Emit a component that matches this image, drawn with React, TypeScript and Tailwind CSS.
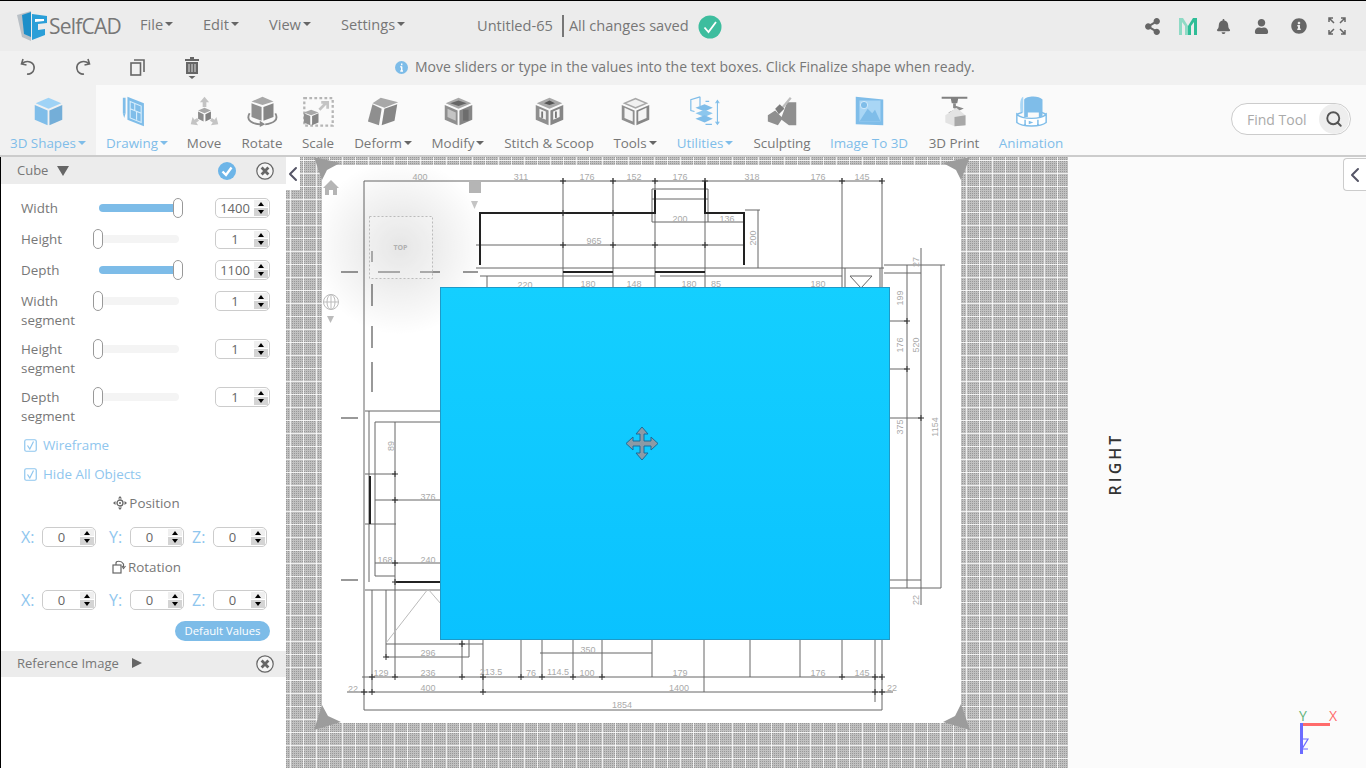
import React from 'react';
import { FaBell, FaInfoCircle, FaShareAlt, FaUser } from 'react-icons/fa';
import { ChevronLeft, Search } from 'lucide-react';

const Caret = ({ color = 'border-t-[#666]' }: { color?: string }) => (
  <span className={`ml-[2px] inline-block h-0 w-0 border-x-[4px] border-t-[4px] border-x-transparent ${color}`} />
);

const MenuItem = ({ label, className }: { label: string; className: string }) => (
  <div className={`mb-[3px] flex items-center text-[14.6px] text-[#777] ${className}`}>
    {label}
    <Caret />
  </div>
);

const Box = ({ top = '#a8a8a8', left = '#8f8f8f', right = '#868686' }) => (
  <>
    <polygon points="18,3 32,9 18,15 4,9" fill={top} />
    <polygon points="3,11 17,17 17,33 3,27" fill={left} />
    <polygon points="19,17 33,11 33,27 19,33" fill={right} />
  </>
);

const icons: Record<string, React.ReactNode> = {
  shapes: <Box top="#9fd3f6" left="#7fbde9" right="#74aed8" />,
  drawing: (
    <>
      <rect x="2" y="3" width="3" height="17" fill="#7fbde9" />
      <polygon points="2,20 5,20 3.5,25" fill="#7fbde9" />
      <polygon points="7,2 25,9 25,34 7,27" fill="#7fbde9" />
      <path d="M10 7 L22 12 L22 30 L10 25 Z M10 15 L22 20 M15 9 L15 17 M17 18 L17 27" fill="none" stroke="#d8eefc" strokeWidth="1.2" />
    </>
  ),
  move: (
    <>
      <path d="M18 2 L23 8 H20 V13 H16 V8 H13 Z M3 32 L5 24 L7 27 L10 25 L12 28 L9 30 L11 33 Z M33 32 L31 24 L29 27 L26 25 L24 28 L27 30 L25 33 Z" fill="#c4c4c4" />
      <polygon points="18,14 25,17 18,20 11,17" fill="#a8a8a8" />
      <polygon points="11,18 17,21 17,29 11,26" fill="#8b8b8b" />
      <polygon points="19,21 25,18 25,26 19,29" fill="#808080" />
    </>
  ),
  rotate: (
    <>
      <polygon points="18,2 30,7 18,11 6,7" fill="#a8a8a8" />
      <polygon points="6,9 17,13 17,28 6,24" fill="#8f8f8f" />
      <polygon points="19,13 30,9 30,24 19,28" fill="#868686" />
      <path d="M4 20 C-1 28 8 32 16 32 M32 20 C36 27 30 31 21 32" fill="none" stroke="#8a8a8a" strokeWidth="2" />
      <path d="M15 28 L21 32 L15 35 Z" fill="#8a8a8a" />
    </>
  ),
  scale: (
    <>
      <rect x="2.5" y="3.5" width="31" height="30" fill="none" stroke="#b5b5b5" strokeWidth="2.5" strokeDasharray="3 2.5" />
      <path d="M19 16 L27 8 M21 8 H28 V15" fill="none" stroke="#c4c4c4" strokeWidth="3" />
      <polygon points="10,16 18,19 10,22 2,19" fill="#a8a8a8" />
      <polygon points="2,20 9,23 9,33 2,30" fill="#8f8f8f" />
      <polygon points="11,23 18,20 18,30 11,33" fill="#868686" />
    </>
  ),
  deform: (
    <>
      <polygon points="15,3 34,8 19,14 6,9" fill="#a8a8a8" />
      <polygon points="6,10 16,15 13,33 1,29" fill="#8f8f8f" />
      <polygon points="19,15 33,10 30,28 16,33" fill="#868686" />
    </>
  ),
  modify: (
    <>
      <Box />
      <polygon points="18,6 27,9 18,12 9,9" fill="#666" />
      <polygon points="6,15 15,19 15,28 6,24" fill="#c4c4c4" />
      <rect x="23" y="16" width="6" height="12" fill="#6d6d6d" />
    </>
  ),
  stitch: (
    <>
      <Box />
      <polygon points="18,6 24,9 18,11 12,9" fill="#555" />
      <polygon points="7,15 14,18 14,27 7,24" fill="#f4f4f4" />
      <polygon points="22,18 29,15 29,24 22,27" fill="#f4f4f4" />
      <rect x="24" y="18" width="2" height="7" fill="#777" />
      <rect x="9" y="18" width="2" height="7" fill="#777" />
    </>
  ),
  tools: (
    <>
      <Box />
      <polygon points="18,5 28,9 18,13 8,9" fill="#f1f1f1" />
      <polygon points="6,14 15,18 15,29 6,25" fill="#f4f4f4" />
      <polygon points="21,18 30,14 30,25 21,29" fill="#f4f4f4" />
    </>
  ),
  utilities: (
    <>
      <path d="M12 2 L2 5 V17 L6 18 M12 2 V12 M18 7 H22 M18 32 H25" fill="none" stroke="#7fbde9" strokeWidth="1.3" />
      <polygon points="17,10 26,14 17,18 7,14" fill="#7fbde9" />
      <polygon points="17,16 26,20 17,24 7,20" fill="#8cc7ee" />
      <polygon points="17,22 26,26 17,30 7,26" fill="#7fbde9" />
      <path d="M31 6 V32 M29 9 L31 6 L33 9 M29 29 L31 32 L33 29" fill="none" stroke="#7fbde9" strokeWidth="1.2" />
    </>
  ),
  sculpting: (
    <>
      <polygon points="2,22 10,17 17,24 23,8 33,8 33,33 25,33 17,27 13,33 2,29" fill="#8f8f8f" />
      <path d="M17 15 L27 3" stroke="#bdbdbd" strokeWidth="2.5" />
      <polygon points="10,15 15,10 20,15 14,21" fill="#7d7d7d" />
    </>
  ),
  image: (
    <>
      <polygon points="3,2 33,5 33,33 3,32" fill="#7fbde9" />
      <rect x="7" y="6" width="23" height="23" fill="#a9d6f5" />
      <polygon points="7,29 16,15 21,20 24,16 30,29" fill="#7fbde9" />
      <circle cx="12" cy="11" r="4" fill="#7fbde9" stroke="#d8eefc" />
    </>
  ),
  print: (
    <>
      <path d="M4 2 H32 V4 H22 L21 9 H15 L14 4 H4 Z" fill="#808080" />
      <path d="M18 9 V13 L24 15 L15 19 L22 22" fill="none" stroke="#8a8a8a" strokeWidth="3" />
      <polygon points="20,14 30,22 30,33 18,34 8,30 8,22" fill="#e3e3e3" />
      <polygon points="18,24 30,22 30,33 18,34" fill="#a8a8a8" />
    </>
  ),
  animation: (
    <>
      <path d="M10 5 C12 1 26 0 30 5 V24 H26 V19 H14 V24 H10 Z" fill="#7fbde9" />
      <path d="M9 2 C6 3 5 8 6 19 L9 19 Z" fill="#a9d6f5" />
      <path d="M2 21 L8 19 M34 21 L29 19 M2 21 V30 C8 35 28 35 34 30 V21 C28 27 8 27 2 21 Z M11 27 V33 M25 27 V33" fill="#fff" stroke="#7fbde9" strokeWidth="1.6" />
      <polygon points="15,28 20,30 15,32" fill="#7fbde9" />
    </>
  ),
};

const tools = [
  { key: 'drawing', label: 'Drawing', w: 'w-[82px]', blue: true, caret: true },
  { key: 'move', label: 'Move', w: 'w-[52px]' },
  { key: 'rotate', label: 'Rotate', w: 'w-[64px]' },
  { key: 'scale', label: 'Scale', w: 'w-[48px]' },
  { key: 'deform', label: 'Deform', w: 'w-[82px]', caret: true },
  { key: 'modify', label: 'Modify', w: 'w-[68px]', caret: true },
  { key: 'stitch', label: 'Stitch & Scoop', w: 'w-[114px]' },
  { key: 'tools', label: 'Tools', w: 'w-[58px]', caret: true },
  { key: 'utilities', label: 'Utilities', w: 'w-[82px]', blue: true, caret: true },
  { key: 'sculpting', label: 'Sculpting', w: 'w-[72px]' },
  { key: 'image', label: 'Image To 3D', w: 'w-[102px]', blue: true },
  { key: 'print', label: '3D Print', w: 'w-[68px]' },
  { key: 'animation', label: 'Animation', w: 'w-[86px]', blue: true },
];

const ToolButton = ({ k, label, w, blue, caret }: { k: string; label: string; w: string; blue?: boolean; caret?: boolean }) => (
  <div className={`flex shrink-0 flex-col items-center pt-[10px] ${w}`}>
    <svg width="33" height="33" viewBox="0 0 36 36">
      {icons[k]}
    </svg>
    <div className={`mt-[6px] flex items-center whitespace-nowrap text-[13.4px] leading-[18px] ${blue ? 'text-[#7fbde9]' : 'text-[#777]'}`}>
      {label}
      {caret && <Caret color={blue ? 'border-t-[#7fbde9]' : 'border-t-[#666]'} />}
    </div>
  </div>
);

const Spinner = () => (
  <div className="flex h-[16px] w-[14px] flex-col justify-between">
    <div className="flex h-[7px] items-center justify-center bg-[#efefef]">
      <span className="h-0 w-0 border-x-[3.5px] border-b-[4px] border-x-transparent border-b-black" />
    </div>
    <div className="flex h-[8px] items-center justify-center bg-[#d4d4d4]">
      <span className="h-0 w-0 border-x-[3.5px] border-t-[4px] border-x-transparent border-t-black" />
    </div>
  </div>
);

const NumberBox = ({ value, w = 'w-[55px]', className = '' }: { value: string; w?: string; className?: string }) => (
  <div className={`flex h-[20px] items-center rounded-[5px] border border-[#ccc] bg-white pr-[1px] ${w} ${className}`}>
    <div className="flex-1 text-center text-[13px] leading-none text-[#666]">{value}</div>
    <Spinner />
  </div>
);

const Slider = ({ full }: { full?: boolean }) => (
  <div className={`relative h-[8px] w-[80px] rounded-full ${full ? 'bg-[#7dbce8]' : 'bg-[#f4f4f4]'}`}>
    <div className={`absolute top-[-6px] h-[20px] w-[10px] rounded-[5px] border border-[#999] bg-white ${full ? 'right-[-4px]' : 'left-[-6px]'}`} />
  </div>
);

const ParamRow = ({ label, second, value, full, className }: { label: string; second?: string; value: string; full?: boolean; className: string }) => (
  <div className={`flex items-start pl-[20px] ${className}`}>
    <div className="w-[78px] text-[13.4px] leading-[19px] text-[#777]">
      <div>{label}</div>
      {second && <div>{second}</div>}
    </div>
    <div className="flex h-[18px] w-[116px] items-center">
      <Slider full={full} />
    </div>
    <NumberBox value={value} className="-mt-[1px]" />
  </div>
);

const Check = ({ label, className }: { label: string; className: string }) => (
  <div className={`flex items-center pl-[23px] text-[13.4px] leading-[18px] text-[#8fc6ee] ${className}`}>
    <svg width="13" height="13" viewBox="0 0 13 13" className="mr-[6px]">
      <rect x="0.75" y="0.75" width="11.5" height="11.5" rx="1.5" fill="none" stroke="#8fc6ee" strokeWidth="1.2" />
      <path d="M3.5 6.5 L5.8 10 L9.5 2.5" fill="none" stroke="#8fc6ee" strokeWidth="1.2" />
    </svg>
    {label}
  </div>
);

const AxisRow = ({ className }: { className: string }) => (
  <div className={`flex items-center pl-[20px] ${className}`}>
    <span className="w-[21px] text-[16px] leading-none text-[#8fc6ee]">X:</span>
    <NumberBox value="0" w="w-[54px]" />
    <span className="ml-[13px] w-[21px] text-[16px] leading-none text-[#8fc6ee]">Y:</span>
    <NumberBox value="0" w="w-[54px]" />
    <span className="ml-[8px] w-[21px] text-[16px] leading-none text-[#8fc6ee]">Z:</span>
    <NumberBox value="0" w="w-[54px]" />
  </div>
);

const CloseCircle = () => (
  <svg width="18" height="18" viewBox="0 0 18 18">
    <circle cx="9" cy="9" r="8.2" fill="#f5f5f5" stroke="#666" strokeWidth="1.2" />
    <path d="M5.6 5.6 L12.4 12.4 M12.4 5.6 L5.6 12.4" stroke="#666" strokeWidth="2.8" />
  </svg>
);

// floor plan, page coordinates
const thin: number[][] = [
  [364, 181, 882, 181], [364, 181, 364, 710], [364, 710, 882, 710], [362, 677, 882, 677], [347, 692, 893, 692],
  [563, 178, 563, 287], [613, 178, 613, 287], [655, 178, 655, 287], [705, 178, 705, 287], [842, 178, 842, 287], [882, 178, 882, 287],
  [652, 189, 708, 189], [652, 189, 652, 222], [708, 189, 708, 222], [652, 199, 708, 199], [652, 222, 745, 222],
  [476, 245, 745, 245], [745, 210, 760, 210], [758, 210, 758, 268],
  [476, 268, 884, 268], [480, 276, 655, 276], [487, 276, 487, 288], [660, 276, 842, 276], [845, 268, 845, 288], [880, 268, 880, 288],
  [850, 276, 872, 276], [850, 276, 861, 288], [872, 276, 861, 288],
  [884, 265, 945, 265], [884, 273, 921, 273], [907, 265, 907, 588], [921, 248, 921, 605], [941, 265, 941, 588],
  [889, 321, 907, 321], [889, 369, 907, 369], [889, 418, 921, 418], [889, 580, 921, 580], [889, 588, 941, 588],
  [365, 411, 441, 411], [375, 422, 441, 422], [375, 422, 375, 576], [395, 422, 395, 677], [369, 411, 369, 582],
  [365, 474, 396, 474], [375, 500, 441, 500], [365, 524, 396, 524], [375, 563, 441, 563], [375, 576, 395, 576],
  [365, 590, 441, 590], [386, 590, 386, 657], [386, 644, 483, 644], [386, 657, 469, 657], [469, 640, 469, 657],
  [462, 640, 462, 677], [483, 640, 483, 692], [372, 590, 372, 692], [521, 640, 521, 677], [542, 640, 542, 677],
  [540, 653, 652, 653], [573, 640, 573, 677], [602, 640, 602, 677], [652, 640, 652, 677], [704, 640, 704, 692],
  [750, 640, 750, 677], [800, 640, 800, 677], [842, 640, 842, 677], [875, 640, 875, 702], [882, 640, 882, 710],
];

const dashes: number[][] = [
  [341, 272, 358, 272], [378, 272, 400, 272], [420, 272, 440, 272], [463, 272, 478, 272],
  [341, 418, 358, 418], [341, 580, 358, 580], [372, 251, 372, 262], [372, 284, 372, 306], [372, 326, 372, 348], [372, 362, 372, 392],
];

const heavy = 'M480 265 V213 H655 V190 M705 181 V213 H744 V265 M563 272 H613 M655 272 H705 M370 476 V524 M396 582 H441';

const dims: [string, number, number][] = [
  ['400', 420, 180], ['311', 521, 180], ['176', 587, 180], ['152', 634, 180], ['176', 680, 180], ['318', 752, 180], ['176', 818, 180], ['145', 862, 180],
  ['200', 680, 222], ['136', 727, 222], ['965', 594, 244], ['220', 525, 288], ['180', 588, 287], ['148', 634, 287], ['180', 689, 287], ['85', 716, 287], ['180', 818, 287],
  ['296', 428, 656], ['350', 588, 653], ['129', 381, 676], ['236', 428, 676], ['213.5', 491, 675], ['76', 531, 676], ['114.5', 558, 675], ['100', 587, 676], ['179', 680, 676], ['176', 818, 676], ['145', 862, 676],
  ['22', 353, 692], ['400', 428, 691], ['1400', 679, 691], ['22', 892, 691], ['1854', 622, 708], ['376', 428, 500], ['168', 385, 563], ['240', 428, 563],
];

const ticks = [[563, 181], [613, 181], [655, 181], [705, 181], [842, 181], [882, 181], [563, 213], [613, 213], [563, 245], [613, 245], [655, 245], [705, 245], [907, 321], [907, 369], [921, 418], [395, 474], [395, 500], [395, 563], [395, 582], [372, 677], [395, 677], [462, 677], [483, 677], [521, 677], [542, 677], [573, 677], [602, 677], [842, 677], [875, 677], [882, 677], [364, 692], [372, 692], [483, 692], [875, 692], [882, 692], [462, 644], [386, 657]];

const Plan = () => (
  <svg viewBox="286 157 782 611" width="782" height="611" className="block">
    <defs>
      <pattern id="fine" x="286" y="157" width="2" height="2" patternUnits="userSpaceOnUse">
        <rect width="2" height="2" fill="#c0c0c0" />
        <rect width="1" height="1" fill="#989898" />
      </pattern>
      <pattern id="major" x="290" y="160" width="13" height="13" patternUnits="userSpaceOnUse">
        <path d="M0 0.5 H13 M0.5 0 V13" stroke="#fff" strokeOpacity="0.8" />
      </pattern>
      <radialGradient id="glow">
        <stop offset="0" stopColor="#000" stopOpacity="0.13" />
        <stop offset="0.5" stopColor="#000" stopOpacity="0.06" />
        <stop offset="1" stopColor="#000" stopOpacity="0" />
      </radialGradient>
      <linearGradient id="cube" x1="0" y1="0" x2="0" y2="1">
        <stop offset="0" stopColor="#14cfff" />
        <stop offset="1" stopColor="#0ac2ff" />
      </linearGradient>
    </defs>
    <rect x="286" y="157" width="782" height="611" fill="url(#fine)" />
    <rect x="286" y="157" width="782" height="611" fill="url(#major)" />
    <rect x="322" y="165" width="639" height="558" fill="#fff" />
    <g fill="#9c9c9c">
      <polygon points="314,157 340,163 327,170 322,180" />
      <polygon points="970,157 943,163 956,170 961,180" />
      <polygon points="322,705 328,716 341,722 314,730" />
      <polygon points="961,704 955,716 943,722 970,730" />
    </g>
    <g stroke="#666" strokeWidth="1">
      {thin.map((l, i) => (
        <line key={i} x1={l[0]} y1={l[1]} x2={l[2]} y2={l[3]} />
      ))}
    </g>
    <g stroke="#777" strokeWidth="1.5">
      {dashes.map((l, i) => (
        <line key={i} x1={l[0]} y1={l[1]} x2={l[2]} y2={l[3]} />
      ))}
    </g>
    <path d={heavy} fill="none" stroke="#222" strokeWidth="2" />
    <path d="M386 643 L428 589 L441 604" fill="none" stroke="#bbb" />
    <g fontFamily="'Liberation Sans', sans-serif" fontSize="9" fill="#aaa" textAnchor="middle">
      {dims.map(([t, x, y], i) => (
        <text key={i} x={x} y={y}>
          {t}
        </text>
      ))}
      <text transform="translate(756 238) rotate(-90)">200</text>
      <text transform="translate(903 298) rotate(-90)">199</text>
      <text transform="translate(903 345) rotate(-90)">176</text>
      <text transform="translate(919 345) rotate(-90)">520</text>
      <text transform="translate(903 427) rotate(-90)">375</text>
      <text transform="translate(938 427) rotate(-90)">1154</text>
      <text transform="translate(919 262) rotate(-90)">27</text>
      <text transform="translate(919 600) rotate(-90)">22</text>
      <text transform="translate(394 446) rotate(-90)">89</text>
    </g>
    {ticks.map(([x, y], i) => (
      <path key={i} d={`M${x - 3} ${y} H${x + 3} M${x} ${y - 3} V${y + 3}`} stroke="#333" />
    ))}
    {/* view cube and its controls */}
    <circle cx="400" cy="247" r="88" fill="url(#glow)" />
    <rect x="369.5" y="216.5" width="63" height="62" fill="#fff" fillOpacity="0.25" stroke="#bbb" strokeDasharray="2 2" />
    <text x="400.5" y="250" textAnchor="middle" fontFamily="'Open Sans', sans-serif" fontSize="7" fontWeight="700" fill="#b0b0b0">TOP</text>
    <path d="M331 180 L339 188 H337 V195 H333 V190 H329 V195 H325 V188 H323 Z" fill="#b5b5b5" />
    <rect x="469" y="181" width="12" height="12" fill="#b5b5b5" />
    <polygon points="471,201 478,201 474.5,209" fill="#c4c4c4" />
    <g fill="none" stroke="#bbb">
      <circle cx="331" cy="302" r="7.5" />
      <ellipse cx="331" cy="302" rx="4" ry="7.5" />
      <path d="M323.5 302 H338.5 M331 294.5 V309.5" />
    </g>
    <polygon points="327,316 334,316 330.5,323" fill="#bbb" />
    {/* cube */}
    <rect x="440.5" y="287.5" width="449" height="352" fill="url(#cube)" stroke="#1e9ac8" />
    <path d="M642 427 L648 434 H644 V441 H651 V437 L658 443.5 L651 450 V446 H644 V453 H648 L642 460 L636 453 H640 V446 H633 V450 L626 443.5 L633 437 V441 H640 V434 H636 Z" fill="#8d9aa5" stroke="#1a6d9c" strokeWidth="1" />
  </svg>
);

export default function App() {
  return (
    <div className="flex h-[768px] w-[1366px] flex-col overflow-hidden bg-white font-['Open_Sans',sans-serif]">
      {/* top menu */}
      <header className="flex h-[51px] shrink-0 items-center border-t border-black bg-[#ececec]">
        <svg width="32" height="32" viewBox="0 0 32 32" className="ml-[16px]">
          <polygon points="1,5 15,1 15,31 6,27" fill="#b9c0c6" />
          <polygon points="6,5 15,2 15,27 8,24" fill="#1d8fc9" />
          <path d="M16 4 L31 6 V13 L22 14 V20 L29 19 V25 L16 30 Z" fill="#2b9fd8" />
          <path d="M19 9 L28 9 V11 L19 12 Z" fill="#fff" />
        </svg>
        <span className="ml-[1px] w-[91px] text-[21px] leading-none tracking-[-0.8px] text-[#777]">SelfCAD</span>
        <MenuItem label="File" className="w-[63px]" />
        <MenuItem label="Edit" className="w-[66px]" />
        <MenuItem label="View" className="w-[72px]" />
        <MenuItem label="Settings" className="w-[136px]" />
        <span className="mb-[1px] text-[14.6px] text-[#777]">Untitled-65</span>
        <span className="mr-[5px] ml-[9px] h-[22px] w-[2px] bg-[#777]" />
        <span className="mb-[1px] text-[14.6px] text-[#777]">All changes saved</span>
        <svg width="24" height="24" viewBox="0 0 24 24" className="ml-[9px] mt-[1px]">
          <circle cx="12" cy="12" r="11.5" fill="#3dbd9e" />
          <path d="M6.5 12.5 L10.5 17 L18 7" fill="none" stroke="#fff" strokeWidth="1.8" />
        </svg>
        <div className="ml-auto flex items-center">
          <FaShareAlt className="mr-[18px] text-[17px] text-[#666]" />
          <svg width="18" height="17" viewBox="0 0 18 17" className="mr-[19px]">
            <path d="M0 0 H4 L9 8 V17 H6 V8 L3 4 V17 H0 Z" fill="#8fdac5" />
            <path d="M18 0 H14 L9 8 V17 H12 V8 L15 4 V17 H18 Z" fill="#2fbd97" />
          </svg>
          <FaBell className="mr-[23px] text-[15px] text-[#666]" />
          <FaUser className="mr-[22px] text-[15px] text-[#666]" />
          <FaInfoCircle className="mr-[21px] text-[16px] text-[#666]" />
          <svg width="18" height="18" viewBox="0 0 18 18" className="mr-[20px]" fill="none" stroke="#666" strokeWidth="1.5">
            <path d="M1 5 V1 H5 M1 1 L6 6 M13 1 H17 V5 M17 1 L12 6 M1 13 V17 H5 M1 17 L6 12 M13 17 H17 V13 M17 17 L12 12" />
          </svg>
        </div>
      </header>
      {/* edit row */}
      <div className="flex h-[34px] shrink-0 items-center bg-[#f1f1f1]">
        <svg width="16" height="18" viewBox="0 0 16 18" className="ml-[20px] mb-[2px]" fill="none" stroke="#666" strokeWidth="1.6">
          <path d="M3 1 L1.5 6 L6.5 7 M2 5.5 C8 1 15 5 14 11 C13.5 14.5 10 16.5 7 16" />
        </svg>
        <svg width="16" height="18" viewBox="0 0 16 18" className="ml-[39px] mb-[2px]" fill="none" stroke="#666" strokeWidth="1.6">
          <path d="M13 1 L14.5 6 L9.5 7 M14 5.5 C8 1 1 5 2 11 C2.5 14.5 6 16.5 9 16" />
        </svg>
        <svg width="15" height="17" viewBox="0 0 15 17" className="ml-[39px] mb-[2px]" fill="none" stroke="#666" strokeWidth="1.6">
          <rect x="1" y="4" width="9.5" height="12" />
          <path d="M4 1 H14 V13" />
        </svg>
        <svg width="14" height="22" viewBox="0 0 14 22" className="ml-[40px]">
          <path d="M5 0 H9 V2 H14 V4 H0 V2 H5 Z M1 5 H13 V17 H1 Z" fill="#666" />
          <path d="M4 7 V15 M7 7 V15 M10 7 V15" stroke="#ddd" />
          <polygon points="3.5,19 10.5,19 7,22" fill="#666" />
        </svg>
        <svg width="13" height="13" viewBox="0 0 13 13" className="ml-[196px] mb-[2px]">
          <circle cx="6.5" cy="6.5" r="6.5" fill="#7dbce8" />
          <path d="M6.7 2.6 V4.2 M6.7 5.5 V10 M5.3 5.7 H6.7 M5.3 10 H8" stroke="#fff" strokeWidth="1.4" />
        </svg>
        <span className="mb-[3px] ml-[7px] whitespace-nowrap text-[14px] text-[#777]">Move sliders or type in the values into the text boxes. Click Finalize shape when ready.</span>
      </div>
      {/* tools */}
      <div className="flex h-[72px] shrink-0 border-b-2 border-[#ccc] bg-[#fafafa]">
        <div className="flex w-[96px] shrink-0 flex-col items-center bg-[#f1f1f1] pt-[10px]">
          <svg width="33" height="33" viewBox="0 0 36 36">
            {icons.shapes}
          </svg>
          <div className="mt-[6px] flex items-center whitespace-nowrap text-[13.4px] leading-[18px] text-[#7fbde9]">
            3D Shapes
            <Caret color="border-t-[#7fbde9]" />
          </div>
        </div>
        {tools.map((t) => (
          <ToolButton key={t.key} k={t.key} label={t.label} w={t.w} blue={t.blue} caret={t.caret} />
        ))}
        <div className="ml-[157px] mt-[18px] flex h-[32px] w-[120px] items-center rounded-full border border-[#ccc] bg-white pl-[15px] text-[14px] text-[#aaa]">
          Find Tool
          <span className="ml-auto mr-[1px] flex h-[30px] w-[30px] items-center justify-center rounded-full bg-[#eee]">
            <Search size={18} strokeWidth={2.5} className="text-[#555]" />
          </span>
        </div>
      </div>
      <main className="flex min-h-0 flex-1">
        {/* left panel */}
        <aside className="flex w-[286px] shrink-0 flex-col border-l border-black bg-white">
          <div className="flex h-[27px] shrink-0 items-center bg-[#ececec] pl-[16px]">
            <span className="text-[13px] text-[#777]">Cube</span>
            <span className="ml-[9px] h-0 w-0 border-x-[6px] border-t-[10px] border-x-transparent border-t-[#666]" />
            <svg width="18" height="18" viewBox="0 0 18 18" className="ml-[149px]">
              <circle cx="9" cy="9" r="9" fill="#6db5e8" />
              <path d="M4.5 9.5 L8 13 L13.5 5.5" fill="none" stroke="#fff" strokeWidth="2.4" />
            </svg>
            <span className="ml-[20px]">
              <CloseCircle />
            </span>
          </div>
          <ParamRow label="Width" value="1400" full className="mt-[15px]" />
          <ParamRow label="Height" value="1" className="mt-[12px]" />
          <ParamRow label="Depth" value="1100" full className="mt-[12px]" />
          <ParamRow label="Width" second="segment" value="1" className="mt-[12px]" />
          <ParamRow label="Height" second="segment" value="1" className="mt-[10px]" />
          <ParamRow label="Depth" second="segment" value="1" className="mt-[10px]" />
          <Check label="Wireframe" className="mt-[10px]" />
          <Check label="Hide All Objects" className="mt-[11px]" />
          <div className="mt-[11px] flex items-center justify-center text-[13.4px] leading-[18px] text-[#777]">
            <svg width="14" height="14" viewBox="0 0 14 14" className="mr-[2px] ml-[6px]">
              <circle cx="7" cy="7" r="3" fill="none" stroke="#666" strokeWidth="1.3" />
              <circle cx="7" cy="7" r="1" fill="#666" />
              <path d="M7 0 L9 2.5 H5 Z M7 14 L9 11.5 H5 Z M0 7 L2.5 5 V9 Z M14 7 L11.5 5 V9 Z" fill="#666" />
            </svg>
            Position
          </div>
          <AxisRow className="mt-[15px]" />
          <div className="mt-[11px] flex items-center justify-center text-[13.4px] leading-[18px] text-[#777]">
            <svg width="14" height="14" viewBox="0 0 14 14" className="mr-[2px] ml-[6px]" fill="none" stroke="#666" strokeWidth="1.2">
              <rect x="1" y="5" width="8" height="8" />
              <path d="M4 5 V3 C4 1 9 0 11.5 4 V7" />
              <path d="M10 6 L11.5 8.5 L13.5 6" />
            </svg>
            Rotation
          </div>
          <AxisRow className="mt-[14px]" />
          <div className="mt-[11px] flex justify-end pr-[16px]">
            <div className="flex h-[20px] w-[95px] items-center justify-center rounded-full bg-[#7dbce8] text-[11.3px] text-white">Default Values</div>
          </div>
          <div className="mt-[10px] flex h-[26px] shrink-0 items-center bg-[#ececec] pl-[16px]">
            <span className="text-[13px] text-[#777]">Reference Image</span>
            <span className="mb-[3px] ml-[13px] h-0 w-0 border-y-[5px] border-l-[10px] border-y-transparent border-l-[#666]" />
            <span className="ml-[114px]">
              <CloseCircle />
            </span>
          </div>
        </aside>
        {/* canvas */}
        <div className="relative w-[782px] shrink-0">
          <Plan />
          <div className="absolute left-0 top-0 flex h-[33px] w-[14px] items-center justify-center overflow-hidden bg-white">
            <ChevronLeft size={24} strokeWidth={2} className="shrink-0 text-[#556]" />
          </div>
        </div>
        {/* right view */}
        <div className="relative flex-1 bg-[#fbfbfb]">
          <span className="absolute left-[16px] top-[299px] origin-center -rotate-90 text-[16px] font-semibold leading-none tracking-[3px] text-[#333]">RIGHT</span>
          <div className="absolute right-0 top-[1px] flex h-[33px] w-[23px] items-center justify-center rounded-l-[4px] border border-r-0 border-[#ccc] bg-white">
            <ChevronLeft size={24} strokeWidth={2} className="shrink-0 text-[#556]" />
          </div>
          <svg width="48" height="56" viewBox="0 0 48 56" className="absolute left-[226px] top-[548px]">
            <text x="5" y="16" fontFamily="'Open Sans', sans-serif" fontSize="14" fill="#5fb37a">Y</text>
            <text x="35" y="16" fontFamily="'Open Sans', sans-serif" fontSize="14" fill="#ff6b6b">X</text>
            <rect x="7" y="18" width="29" height="3" fill="#ff6b6b" />
            <rect x="6" y="18" width="3" height="31" fill="#6b6bff" />
            <path d="M9 34 H14 L8 44 H14" fill="none" stroke="#6b6bff" strokeWidth="1.2" />
          </svg>
        </div>
      </main>
    </div>
  );
}
